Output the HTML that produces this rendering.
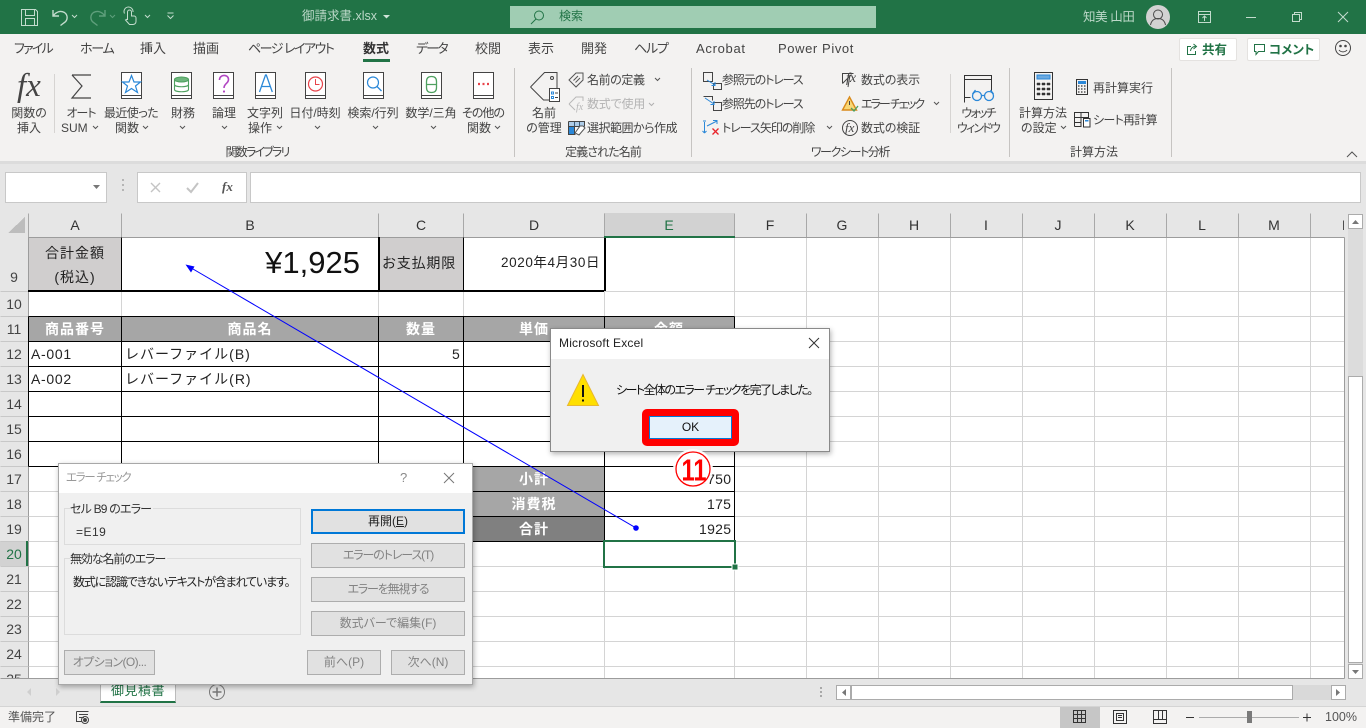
<!DOCTYPE html>
<html lang="ja"><head><meta charset="utf-8"><title>御請求書.xlsx - Excel</title>
<style>
html,body{margin:0;padding:0}
body{width:1366px;height:728px;position:relative;overflow:hidden;background:#e6e6e6;font-family:"Liberation Sans","Noto Sans CJK JP",sans-serif;color:#444}
div,span,svg{box-sizing:border-box}
.a{position:absolute}
svg.a{overflow:visible}
.t{position:absolute;white-space:nowrap;line-height:16px;height:16px;font-size:12px;font-feature-settings:"palt"}
.c{position:absolute;white-space:nowrap;line-height:16px;height:16px;font-size:12px;font-feature-settings:"palt";width:200px;text-align:center}
.tab{font-size:13px;color:#444;top:41px}
.cell{position:absolute;white-space:nowrap;line-height:18px;height:18px;font-size:14px;color:#222;letter-spacing:1px}
.cc{position:absolute;white-space:nowrap;line-height:18px;height:18px;font-size:14px;color:#222;letter-spacing:1px;width:200px;text-align:center}
.hd{position:absolute;width:200px;text-align:center;font-size:14px;line-height:18px;height:18px;color:#333;top:216px}
.rn{position:absolute;left:0;width:28px;text-align:center;font-size:14px;line-height:18px;height:18px;color:#444}
.w{color:#fff;font-weight:bold}
.btn{position:absolute;background:#e1e1e1;border:1px solid #adadad;text-align:center;font-size:12px;font-feature-settings:"palt";color:#838383;white-space:nowrap}
</style></head><body>

<!-- Title bar -->
<div class="a" style="left:0;top:0;width:1366px;height:34px;background:#217346"></div>
<svg class="a" style="left:0;top:0" width="400" height="34" fill="none" stroke="#c3dccd" stroke-width="1">
<path d="M21.5 9.5h14l2 2v14h-16zM25.5 9.5v6h9v-6M25.5 25.5v-7h9v7"/>
<path d="M53 10v6h6M53.5 15.5c3-4 7-5 11-3 4 3 3 8 0 10l-4 3" stroke-width="1.4"/>
<path d="M72 15l2.500 2.500 2.500-2.500"/>
<path d="M105 10v6h-6M104.500 15.500c-3-4-7-5-11-3-4 3-3 8 0 10l4 3" stroke="#5f9f7c" stroke-width="1.400"/>
<path d="M110 15l2.500 2.500 2.500-2.500" stroke="#5f9f7c"/>
<path d="M127.500 20v-8a2 2 0 0 1 4 0v4h2.500a2 2 0 0 1 2 2v3.500a3 3 0 0 1-3 3h-3.500l-4-4.500 2-1M124.500 13.500a4.500 4.500 0 1 1 8.500-1.500"/>
<path d="M145 15l2.500 2.500 2.500-2.500M167.500 13h6M167.500 15.500l3 3 3-3"/>
</svg>
<div class="t" style="left:302px;top:8px;font-size:12.500px;color:#bcd8c8">御請求書.xlsx</div>
<svg class="a" style="left:383px;top:14px" width="8" height="6"><path d="M0 1h7L3.500 4.500z" fill="#d0e4d8"/></svg>
<div class="a" style="left:510px;top:6px;width:366px;height:22px;background:#a0cdb3"></div>
<svg class="a" style="left:528px;top:8px" width="20" height="18" fill="none" stroke="#217346"><circle cx="11" cy="7.500" r="4.500"/><path d="M8 11l-5 5"/></svg>
<div class="t" style="left:559px;top:8px;color:#217346;font-size:12px">検索</div>
<div class="t" style="left:1083px;top:9px;color:#bcd8c8;font-size:12.500px;letter-spacing:-.4px">知美 山田</div>
<div class="a" style="left:1146px;top:5px;width:24px;height:24px;border-radius:50%;background:#d2d2d2"></div>
<svg class="a" style="left:1146px;top:5px" width="24" height="24" fill="none" stroke="#4a4a4a"><circle cx="12" cy="9.500" r="4.500"/><path d="M4.500 20c1-5 4-6.500 7.500-6.500s6.500 1.500 7.500 6.500"/></svg>
<svg class="a" style="left:1190px;top:5px" width="170" height="24" fill="none" stroke="#c3dccd">
<path d="M8.500 6.500h12v11h-12zM8.500 9.500h12M14.500 16v-4.500M12.500 13l2-2 2 2"/>
<path d="M56 12.500h10"/>
<path d="M102.500 9.500h7v7h-7zM104.500 9.500v-2h7v7h-2"/>
<path d="M148 7l10 10M158 7l-10 10"/>
</svg>

<!-- Ribbon -->
<div class="a" style="left:0;top:34px;width:1366px;height:127px;background:#f3f2f1"></div>
<div class="a" style="left:0;top:161px;width:1366px;height:3px;background:#dcdcdc"></div>

<div class="t tab" style="left:14px;letter-spacing:-1.800px">ファイル</div>
<div class="t tab" style="left:80px;letter-spacing:-1.200px">ホーム</div>
<div class="t tab" style="left:140px">挿入</div>
<div class="t tab" style="left:193px">描画</div>
<div class="t tab" style="left:248px;letter-spacing:-1.500px">ページ レイアウト</div>
<div class="t tab" style="left:363px;font-weight:bold;color:#333">数式</div>
<div class="a" style="left:363px;top:59px;width:27px;height:3px;background:#217346"></div>
<div class="t tab" style="left:416px;letter-spacing:-1.800px">データ</div>
<div class="t tab" style="left:475px">校閲</div>
<div class="t tab" style="left:528px">表示</div>
<div class="t tab" style="left:581px">開発</div>
<div class="t tab" style="left:634px;letter-spacing:-1.200px">ヘルプ</div>
<div class="t tab" style="left:696px;letter-spacing:.7px">Acrobat</div>
<div class="t tab" style="left:778px;letter-spacing:.6px">Power Pivot</div>

<!-- share / comment -->
<div class="a" style="left:1179px;top:38px;width:58px;height:23px;background:#fff;border:1px solid #e4e2e0;border-radius:2px"></div>
<svg class="a" style="left:1185px;top:42px" width="14" height="14" fill="none" stroke="#217346"><path d="M6 4.500H2.500v8h8V9M5.500 9c.5-3 2.500-4.500 5-4.500M8.500 2l3 2.500-3 2.500"/></svg>
<div class="t" style="left:1202px;top:42px;font-size:12.500px;font-weight:bold;color:#217346">共有</div>
<div class="a" style="left:1247px;top:38px;width:73px;height:23px;background:#fff;border:1px solid #e4e2e0;border-radius:2px"></div>
<svg class="a" style="left:1253px;top:43px" width="14" height="14" fill="none" stroke="#217346"><path d="M1.500 1.500h10v7h-6l-2.500 3v-3h-1.500z"/></svg>
<div class="t" style="left:1269px;top:42px;font-size:12.500px;font-weight:bold;color:#217346">コメント</div>
<svg class="a" style="left:1334px;top:39px" width="18" height="18" fill="none" stroke="#444"><circle cx="9" cy="9" r="7.500"/><circle cx="6.500" cy="7" r=".8" fill="#444"/><circle cx="11.500" cy="7" r=".8" fill="#444"/><path d="M5 11c2 2.500 6 2.500 8 0"/></svg>

<!-- separators -->
<svg class="a" style="left:0;top:0" width="1366" height="162" stroke-width="1" shape-rendering="crispEdges">
<path d="M54.500 74v59M950.500 74v59" stroke="#d6d4d2"/>
<path d="M514.500 68v89M691.500 68v89M1009.500 68v89M1171.500 68v89" stroke="#c6c4c2"/>
</svg>

<!-- Ribbon icons: function library -->
<div class="t" style="left:17px;top:68px;height:36px;line-height:36px;font-family:'Liberation Serif',serif;font-style:italic;font-size:33px;color:#444;font-feature-settings:normal">fx</div>
<svg class="a" style="left:0;top:0" width="520" height="112" fill="none">
<path d="M72 75h19M72 75l10 11-10 12h19" stroke="#444" stroke-width="1.200"/>
<g stroke="#444" fill="#fff">
<path d="M121.500 72.500h20v26h-20zM121.500 95.500h20"/>
<path d="M171.500 72.500h20v26h-20zM171.500 95.500h20"/>
<path d="M213.500 72.500h20v26h-20zM213.500 95.500h20"/>
<path d="M255.500 72.500h20v26h-20zM255.500 95.500h20"/>
<path d="M305.500 72.500h20v26h-20zM305.500 95.500h20"/>
<path d="M363.500 72.500h20v26h-20zM363.500 95.500h20"/>
<path d="M421.500 72.500h20v26h-20zM421.500 95.500h20"/>
<path d="M473.500 72.500h20v26h-20zM473.500 95.500h20"/>
</g>
<path d="M131.500 75.500l2.500 6.500h6.500l-5 4 2 6.500-6-4-6 4 2-6.500-5-4h6.500z" stroke="#2b88d8" stroke-width="1.200"/>
<g stroke="#4ea05f" stroke-width="1.100"><ellipse cx="181.500" cy="79.500" rx="7" ry="2.500" fill="#6fb67d"/><path d="M174.500 79.500v10c0 3 14 3 14 0v-10M174.500 84.500c0 3 14 3 14 0"/></g>
<path d="M219.500 80c0-6 9-6 9-.5 0 4-4.500 4-4.500 8.500" stroke="#b146c2" stroke-width="1.600"/><circle cx="224" cy="91.500" r="1.100" fill="#b146c2"/>
<path d="M259.500 92l6-17h.8l6 17M261.500 86.500h9" stroke="#2b88d8" stroke-width="1.300"/>
<circle cx="315.500" cy="84" r="7" stroke="#e8434a" stroke-width="1.200"/><path d="M315.500 79v5.500h4" stroke="#e8434a"/>
<circle cx="373" cy="82.500" r="5.500" stroke="#2b88d8" stroke-width="1.200"/><path d="M377 86.500l4.500 4.500" stroke="#2b88d8" stroke-width="1.300"/>
<path d="M431.500 76.500c3.500 0 5 2 5 5v6c0 3-1.500 5-5 5s-5-2-5-5v-6c0-3 1.500-5 5-5zM426.500 84.500h10" stroke="#4ea05f" stroke-width="1.300"/>
<path d="M478 84h2M482.500 84h2M487 84h2" stroke="#e8434a" stroke-width="2.200"/>
</svg>

<div class="c" style="left:-71px;top:105px">関数の</div><div class="c" style="left:-71px;top:120px">挿入</div>
<div class="c" style="left:-19px;top:105px;letter-spacing:-1px">オート</div><div class="t" style="left:61px;top:120px">SUM</div>
<div class="c" style="left:31px;top:105px;letter-spacing:-.6px">最近使った</div><div class="t" style="left:115px;top:120px">関数</div>
<div class="c" style="left:83px;top:105px">財務</div>
<div class="c" style="left:124px;top:105px">論理</div>
<div class="c" style="left:165px;top:105px">文字列</div><div class="t" style="left:248px;top:120px">操作</div>
<div class="c" style="left:215px;top:105px">日付/時刻</div>
<div class="c" style="left:273px;top:105px">検索/行列</div>
<div class="c" style="left:331px;top:105px">数学/三角</div>
<div class="c" style="left:383px;top:105px;letter-spacing:-1px">その他の</div><div class="t" style="left:467px;top:120px">関数</div>
<div class="c" style="left:157px;top:144px;letter-spacing:-1.800px">関数ライブラリ</div>
<svg class="a" style="left:0;top:0" width="1366" height="162" fill="none" stroke="#555">
<path d="M93 126l2.500 2.500 2.500-2.500M143 126l2.500 2.500 2.500-2.500M180 126l2.500 2.500 2.500-2.500M222 126l2.500 2.500 2.500-2.500M277 126l2.500 2.500 2.500-2.500M315 126l2.500 2.500 2.500-2.500M373 126l2.500 2.500 2.500-2.500M431 126l2.500 2.500 2.500-2.500M495 126l2.500 2.500 2.500-2.500M655 78l2.500 2.500 2.500-2.500M827 126l2.500 2.500 2.500-2.500M934 102l2.500 2.500 2.500-2.500M1061 126l2.500 2.500 2.500-2.500M1347 157l5-5 5 5"/>
<path d="M649 103l2.500 2.500 2.500-2.500" stroke="#b0b0b0"/>
<!-- defined names -->
<path d="M530.500 87l14-14.500h12.500v20.500M530.500 87l13 13h7" stroke="#444"/><circle cx="552" cy="78" r="1.500" stroke="#444"/>
<path d="M549.500 88.500h10v13h-10z" stroke="#444" fill="#fff"/><path d="M551.500 92h2v2h-2zM551.500 96.500h2v2h-2z" stroke="#2b88d8"/><path d="M555 93h3M555 97.500h3" stroke="#444"/>
<path d="M569 80l7-7h7v7l-7 7zM573.500 80.500l4.500-4.500M575.500 82.500l4.500-4.500" stroke="#555"/>
<path d="M569 104l7-7h7v4M569 104l6 6" stroke="#b8b8b8"/>
<path d="M568.500 121.500h16v5M568.500 121.500v13h7M568.500 126.500h16M574.500 121.500v13M579.500 121.500v5" stroke="#444"/>
<path d="M569 127h5v7h-5z" fill="#2b88d8" stroke="none"/><path d="M569 122h15v4h-15z" fill="#2b88d8" stroke="none" opacity=".35"/>
<path d="M575 133l5-7h3l2 2-6 7z" stroke="#555" fill="#fff"/>
<!-- trace icons -->
<path d="M703.500 72.500h9v9h-9zM713.500 83.500h8v6h-8z" stroke="#444"/><path d="M707 80l8 5M711.500 85.500h3.500v-3.500" stroke="#2b88d8"/>
<path d="M703.500 96.500h9v4M703.500 96.500v0M713.500 102.500h8v8h-8z" stroke="#444"/><path d="M705 98l9 6M710.500 104.500h3.500v-3.500" stroke="#2b88d8"/>
<path d="M704.500 122v11M704.500 133l-2-2M704.500 133l2-2M707 126l10-5M713 120.500h4v3.500M703 121h3" stroke="#2b88d8"/>
<path d="M712.500 128.500l6 6M718.500 128.500l-6 6" stroke="#e8232a" stroke-width="1.300"/>
<path d="M842.500 83.500v-10h11M842.500 83.500l9-9" stroke="#444"/>
<path d="M848 87l2-12" stroke="#444"/>
<path d="M849.500 97l7 13h-14z" stroke="#d98a1b" stroke-width="1.400" fill="#f8d775"/><path d="M849.500 101v4" stroke="#444"/>
<path d="M851 108l3 3 4-5" stroke="#4ea05f" stroke-width="1.300"/>
<circle cx="850" cy="128" r="7.500" stroke="#444"/>
<!-- watch -->
<path d="M964.500 102.500v-27h27v16M964.500 79.500h27M964.500 97.500h6" stroke="#333"/>
<g stroke="#2b88d8" stroke-width="1.300"><circle cx="977" cy="96" r="4.500"/><circle cx="989" cy="96" r="4.500"/><path d="M981.500 95.500h3M972.500 94l3-4M993.500 94l-3-4"/></g>
<!-- calc -->
<path d="M1034.500 72.500h18v27h-18z" stroke="#333"/><path d="M1037 75h13v4h-13z" fill="#6aa9e0" stroke="#2b88d8"/>
<path d="M1037 83h3v2h-3zM1042 83h3v2h-3zM1047 83h3v2h-3zM1037 88h3v2h-3zM1042 88h3v2h-3zM1047 88h3v2h-3zM1037 93h3v2h-3zM1042 93h3v2h-3zM1047 93h3v2h-3z" fill="#333" stroke="#333" stroke-width=".5"/>
<path d="M1076.500 79.500h11v15h-11z" stroke="#333"/><path d="M1078 81h8v3h-8z" fill="#2b88d8" stroke="none"/>
<path d="M1078 86h1.500M1081 86h1.500M1084 86h1.500M1078 89h1.500M1081 89h1.500M1084 89h1.500M1078 92h1.500M1081 92h1.500M1084 92h1.500" stroke="#333" stroke-width="1.300"/>
<path d="M1074.500 126.500v-14h14v7M1074.500 117.500h14M1074.500 122.500h7M1081 112.500v14M1074.500 126.500h7" stroke="#333"/>
<path d="M1083.500 118.500h6.500v8.500h-6.500z" stroke="#333" fill="#fff"/><path d="M1085 120h3.500v1.500h-3.500z" fill="#2b88d8" stroke="none"/>
</svg>
<div class="t" style="left:846px;top:70px;height:18px;line-height:18px;font-family:'Liberation Serif',serif;font-style:italic;font-size:14px;color:#444;font-feature-settings:normal">fx</div>
<div class="t" style="left:845px;top:119px;height:18px;line-height:18px;font-family:'Liberation Serif',serif;font-style:italic;font-size:13px;color:#444;font-feature-settings:normal">fx</div>
<div class="t" style="left:576px;top:101px;height:14px;line-height:14px;font-family:'Liberation Serif',serif;font-style:italic;font-size:10px;color:#b8b8b8;font-feature-settings:normal">fx</div>

<div class="c" style="left:444px;top:105px">名前</div><div class="c" style="left:444px;top:120px">の管理</div>
<div class="t" style="left:587px;top:72px;letter-spacing:-.4px">名前の定義</div>
<div class="t" style="left:587px;top:96px;color:#b4b4b4;letter-spacing:-.2px">数式で使用</div>
<div class="t" style="left:587px;top:120px;letter-spacing:-.5px">選択範囲から作成</div>
<div class="c" style="left:503px;top:144px;letter-spacing:-.9px">定義された名前</div>
<div class="t" style="left:722px;top:72px;letter-spacing:-1.100px">参照元のトレース</div>
<div class="t" style="left:722px;top:96px;letter-spacing:-1.100px">参照先のトレース</div>
<div class="t" style="left:722px;top:120px;letter-spacing:-1px">トレース矢印の削除</div>
<div class="t" style="left:861px;top:72px;letter-spacing:-.1px">数式の表示</div>
<div class="t" style="left:861px;top:96px;letter-spacing:-2px">エラー チェック</div>
<div class="t" style="left:861px;top:120px;letter-spacing:-.1px">数式の検証</div>
<div class="c" style="left:750px;top:144px;letter-spacing:-1.400px">ワークシート分析</div>
<div class="c" style="left:878px;top:105px;letter-spacing:-1.800px">ウォッチ</div><div class="c" style="left:878px;top:120px;letter-spacing:-1.800px">ウィンドウ</div>
<div class="c" style="left:943px;top:105px">計算方法</div><div class="t" style="left:1021px;top:120px">の設定</div>
<div class="t" style="left:1093px;top:80px">再計算実行</div>
<div class="t" style="left:1093px;top:112px;letter-spacing:-.7px">シート再計算</div>
<div class="c" style="left:994px;top:144px">計算方法</div>

<!-- Formula bar -->
<div class="a" style="left:5px;top:172px;width:102px;height:31px;background:#fff;border:1px solid #c8c8c8"></div>
<svg class="a" style="left:0;top:165px" width="1366" height="40">
<path d="M93 20h7l-3.500 4z" fill="#777"/>
<path d="M122 19h2v2h-2zM122 24h2v2h-2zM122 29h2v2h-2z" fill="#b5b5b5" transform="translate(0,-5)"/>
<path d="M1349 20l3.500 3.500 3.500-3.500" fill="none" stroke="#777" stroke-width="2"/>
</svg>
<div class="a" style="left:137px;top:172px;width:110px;height:31px;background:#fff;border:1px solid #c8c8c8"></div>
<div class="a" style="left:250px;top:172px;width:1111px;height:31px;background:#fff;border:1px solid #c8c8c8"></div>
<svg class="a" style="left:137px;top:172px" width="110" height="31" fill="none">
<path d="M14 11l9 9M23 11l-9 9" stroke="#c4c4c4" stroke-width="1.400"/>
<path d="M50 16l4 4 7-9" stroke="#c4c4c4" stroke-width="2"/>
</svg>
<div class="t" style="left:222px;top:179px;font-family:'Liberation Serif',serif;font-style:italic;font-weight:bold;font-size:13px;color:#555;font-feature-settings:normal">fx</div>

<!-- Sheet -->
<div class="a" style="left:28px;top:237px;width:1316px;height:441px;background:#fff"></div>
<svg class="a" style="left:0;top:0" width="1366" height="728" shape-rendering="crispEdges">
<!-- corner + selected headers -->
<path d="M8 233h17v-16z" fill="#bdbdbd"/>
<rect x="604" y="213" width="130" height="24" fill="#d2d2d2"/>
<rect x="0" y="541" width="28" height="25" fill="#d2d2d2"/>
<!-- fills -->
<rect x="28" y="237" width="93" height="54" fill="#d0cece"/>
<rect x="378" y="237" width="85" height="54" fill="#d0cece"/>
<rect x="28" y="316" width="706" height="25" fill="#a6a6a6"/>
<rect x="463" y="466" width="141" height="50" fill="#a6a6a6"/>
<rect x="463" y="516" width="141" height="25" fill="#808080"/>
<g transform="translate(.5,.5)" fill="none">
<!-- grid -->
<path stroke="#d4d4d4" d="M121 237V678M378 237V678M463 237V678M604 237V678M734 237V678M806 237V678M878 237V678M950 237V678M1022 237V678M1094 237V678M1166 237V678M1238 237V678M1310 237V678
M28 291H1344M28 316H1344M28 341H1344M28 366H1344M28 391H1344M28 416H1344M28 441H1344M28 466H1344M28 491H1344M28 516H1344M28 541H1344M28 566H1344M28 591H1344M28 616H1344M28 641H1344M28 666H1344"/>
<!-- header ticks -->
<path stroke="#a8a8a8" d="M28 213V237M121 213V237M378 213V237M463 213V237M604 213V237M734 213V237M806 213V237M878 213V237M950 213V237M1022 213V237M1094 213V237M1166 213V237M1238 213V237M1310 213V237"/>
<path stroke="#9c9c9c" d="M28 237H1344M28 237V678M1344 237V678M0 678H1344"/>
<path stroke="#c8c8c8" d="M0 291H28M0 316H28M0 341H28M0 366H28M0 391H28M0 416H28M0 441H28M0 466H28M0 491H28M0 516H28M0 541H28M0 566H28M0 591H28M0 616H28M0 641H28M0 666H28"/>
<!-- black borders -->
<path stroke="#000" d="M121 237V291M463 237V291M28 316H734M28 341H734M28 366H734M28 391H734M28 416H734M28 441H734M28 466H734M463 491H734M463 516H734M463 541H734
M121 316V466M378 316V466M463 316V541M604 316V541M734 316V541M28 316V466"/>
</g>
<path fill="#000" d="M28 290h576v2H28zM378 237h2v54h-2zM604 237h2v54h-2z"/>
<!-- selected column underline -->
<rect x="604" y="236" width="131" height="2" fill="#217346"/>
<rect x="26" y="541" width="2" height="25" fill="#217346"/>
<!-- selection -->
<path d="M604 541h131v26H604z" fill="none" stroke="#217346" stroke-width="2"/>
<rect x="732" y="564" width="6" height="6" fill="#217346" stroke="#fff" stroke-width="1"/>
</svg>

<!-- headers -->
<div class="hd" style="left:-25px">A</div>
<div class="hd" style="left:150px">B</div>
<div class="hd" style="left:321px">C</div>
<div class="hd" style="left:434px">D</div>
<div class="hd" style="left:569px;color:#217346">E</div>
<div class="hd" style="left:670px">F</div>
<div class="hd" style="left:742px">G</div>
<div class="hd" style="left:814px">H</div>
<div class="hd" style="left:886px">I</div>
<div class="hd" style="left:958px">J</div>
<div class="hd" style="left:1030px">K</div>
<div class="hd" style="left:1102px">L</div>
<div class="hd" style="left:1174px">M</div>
<div class="a" style="left:1311px;top:216px;width:33px;height:18px;overflow:hidden;font-size:14px;line-height:18px;color:#333;padding-left:31px">N</div>

<div class="rn" style="top:268px">9</div>
<div class="rn" style="top:295px">10</div>
<div class="rn" style="top:320px">11</div>
<div class="rn" style="top:345px">12</div>
<div class="rn" style="top:370px">13</div>
<div class="rn" style="top:395px">14</div>
<div class="rn" style="top:420px">15</div>
<div class="rn" style="top:445px">16</div>
<div class="rn" style="top:470px">17</div>
<div class="rn" style="top:495px">18</div>
<div class="rn" style="top:520px">19</div>
<div class="rn" style="top:545px;color:#217346">20</div>
<div class="rn" style="top:570px">21</div>
<div class="rn" style="top:595px">22</div>
<div class="rn" style="top:620px">23</div>
<div class="rn" style="top:645px">24</div>
<div class="a" style="left:0;top:667px;width:28px;height:11px;overflow:hidden"><div class="rn" style="top:3px">25</div></div>

<!-- cells -->
<div class="cc" style="left:-25px;top:244px">合計金額</div>
<div class="cc" style="left:-25px;top:268px">(税込)</div>
<div class="a" style="left:121px;top:240px;width:239px;text-align:right;white-space:nowrap;font-size:31px;line-height:46px;color:#111">¥1,925</div>
<div class="cell" style="left:382px;top:254px;letter-spacing:.8px">お支払期限</div>
<div class="cell" style="left:501px;top:254px;font-size:13.500px;letter-spacing:.6px">2020年4月30日</div>
<div class="cc w" style="left:-25px;top:320px">商品番号</div>
<div class="cc w" style="left:150px;top:320px">商品名</div>
<div class="cc w" style="left:321px;top:320px">数量</div>
<div class="cc w" style="left:434px;top:320px">単価</div>
<div class="cc w" style="left:569px;top:320px">金額</div>
<div class="cell" style="left:31px;top:345px;letter-spacing:.7px">A-001</div>
<div class="cell" style="left:31px;top:370px;letter-spacing:.7px">A-002</div>
<div class="cell" style="left:125px;top:345px">レバーファイル(B)</div>
<div class="cell" style="left:125px;top:370px">レバーファイル(R)</div>
<div class="cell" style="left:452px;top:345px;letter-spacing:0">5</div>
<div class="cc w" style="left:434px;top:470px">小計</div>
<div class="cc w" style="left:434px;top:495px">消費税</div>
<div class="cc w" style="left:434px;top:520px">合計</div>
<div class="cell" style="left:699px;top:470px;letter-spacing:.3px">1750</div>
<div class="cell" style="left:707px;top:495px;letter-spacing:.3px">175</div>
<div class="cell" style="left:699px;top:520px;letter-spacing:.3px">1925</div>

<!-- trace arrow -->
<svg class="a" style="left:0;top:0" width="1366" height="728">
<path d="M636 528L187 265.500" stroke="#0000ff" stroke-width="1" fill="none"/>
<path d="M185.500 264.500l9 2-3.500 6z" fill="#0000ff"/>
<circle cx="636" cy="528" r="2.800" fill="#0000ff"/>
</svg>

<!-- bottom strip -->
<div class="a" style="left:0;top:679px;width:1348px;height:27px;background:#e6e6e6"></div>
<svg class="a" style="left:0;top:679px" width="1366" height="27">
<path d="M27 13l4-4v8zM56 9l4 4-4 4z" fill="#cfcfcf"/>
<circle cx="217" cy="13" r="7.500" fill="none" stroke="#777"/><path d="M212.500 13h9M217 8.500v9" stroke="#777" stroke-width="1.500"/>
<path d="M820 8h2v2h-2zM820 12h2v2h-2zM820 16h2v2h-2z" fill="#a8a8a8"/>
</svg>
<div class="a" style="left:100px;top:678px;width:76px;height:25px;background:#fff;border-left:1px solid #bbb;border-right:1px solid #bbb;border-bottom:2px solid #217346;text-align:center;font-size:13px;line-height:26px;color:#217346;letter-spacing:.5px;overflow:hidden">御見積書</div>

<!-- h scrollbar -->
<div class="a" style="left:836px;top:685px;width:509px;height:15px;background:#d9d9d9"></div>
<div class="a" style="left:851px;top:685px;width:442px;height:15px;background:#fff;border:1px solid #ababab"></div>
<div class="a" style="left:836px;top:685px;width:15px;height:15px;background:#fff;border:1px solid #ababab"></div>
<div class="a" style="left:1331px;top:685px;width:15px;height:15px;background:#fff;border:1px solid #ababab"></div>
<svg class="a" style="left:836px;top:685px" width="510" height="15"><path d="M10 4v7l-4-3.500zM500 4v7l4-3.500z" fill="#777"/></svg>

<!-- v scrollbar -->
<div class="a" style="left:1348px;top:214px;width:15px;height:465px;background:#dcdcdc"></div>
<div class="a" style="left:1348px;top:214px;width:15px;height:15px;background:#fff;border:1px solid #ababab"></div>
<div class="a" style="left:1348px;top:376px;width:15px;height:287px;background:#fff;border:1px solid #ababab"></div>
<div class="a" style="left:1348px;top:664px;width:15px;height:15px;background:#fff;border:1px solid #ababab"></div>
<svg class="a" style="left:1348px;top:214px" width="15" height="465"><path d="M4 10h7L7.500 6zM4 456h7l-3.500 4z" fill="#777"/></svg>

<!-- status bar -->
<div class="a" style="left:0;top:706px;width:1366px;height:22px;background:#f3f2f1;border-top:1px solid #d4d4d4"></div>
<div class="t" style="left:8px;top:709px;color:#555;font-feature-settings:normal;letter-spacing:0">準備完了</div>
<svg class="a" style="left:75px;top:710px" width="15" height="15" fill="none" stroke="#444"><path d="M1.500 1.500h12M1.500 1.500v10h5M4 4.500h9M4 7.500h5"/><circle cx="10" cy="10" r="3.500"/><circle cx="10" cy="10" r="1.500" fill="#444"/></svg>
<div class="a" style="left:1060px;top:707px;width:40px;height:21px;background:#c6c6c6"></div>
<svg class="a" style="left:1060px;top:707px" width="306" height="21" fill="none" stroke="#333" shape-rendering="crispEdges">
<path d="M13.500 3.500h12v12h-12zM13.500 7.500h12M13.500 11.500h12M17.500 3.500v12M21.500 3.500v12"/>
<path d="M53.500 3.500h13v13h-13zM56.500 6.500h7v7h-7zM58 8.500h4M58 10.500h4"/>
<path d="M93.500 3.500h13v13h-13zM93.500 12.500h13M98.500 3.500v9M102.500 3.500v9"/>
<path d="M126 10.500h8M243 10.500h8M247 6.500v8"/>
<path d="M139 10.500h100" stroke="#ababab"/>
</svg>
<div class="a" style="left:1247px;top:711px;width:5px;height:12px;background:#7a7a7a"></div>
<div class="t" style="left:1325px;top:709px;font-size:12.500px;color:#555;font-feature-settings:normal">100%</div>

<!-- Error check dialog -->
<div class="a" style="left:58px;top:463px;width:415px;height:222px;background:#f0f0f0;border:1px solid #a8a8a8;box-shadow:1px 2px 5px rgba(0,0,0,.3)"></div>
<div class="a" style="left:59px;top:464px;width:413px;height:29px;background:#fff"></div>
<div class="t" style="left:66px;top:470px;font-size:11.500px;color:#999;letter-spacing:-1.300px">エラー チェック</div>
<div class="t" style="left:400px;top:470px;font-size:13px;color:#8a8a8a;font-feature-settings:normal">?</div>
<svg class="a" style="left:443px;top:472px" width="12" height="12" fill="none" stroke="#777"><path d="M1 1l10 10M11 1L1 11"/></svg>
<div class="a" style="left:64px;top:508px;width:237px;height:37px;border:1px solid #dcdcdc"></div>
<div class="a" style="left:64px;top:558px;width:237px;height:77px;border:1px solid #dcdcdc"></div>
<div class="t" style="left:70px;top:501px;background:#f0f0f0;color:#333;padding-right:2px;letter-spacing:-.8px">セル B9 のエラー</div>
<div class="t" style="left:76px;top:524px;color:#333;letter-spacing:.5px">=E19</div>
<div class="t" style="left:70px;top:551px;background:#f0f0f0;color:#333;padding-right:2px;letter-spacing:-1.100px">無効な名前のエラー</div>
<div class="t" style="left:73px;top:574px;color:#222;letter-spacing:-1.150px">数式に認識できないテキストが含まれています。</div>
<div class="btn" style="left:311px;top:509px;width:154px;height:25px;border:2px solid #0078d7;color:#222;line-height:21px">再開(<u>E</u>)</div>
<div class="btn" style="left:311px;top:543px;width:154px;height:25px;line-height:23px;letter-spacing:-1.100px">エラーのトレース(T)</div>
<div class="btn" style="left:311px;top:577px;width:154px;height:25px;line-height:23px;letter-spacing:-1.200px">エラーを無視する</div>
<div class="btn" style="left:311px;top:611px;width:154px;height:25px;line-height:23px">数式バーで編集(F)</div>
<div class="btn" style="left:64px;top:650px;width:91px;height:25px;line-height:23px;letter-spacing:-.6px">オプション(O)...</div>
<div class="btn" style="left:307px;top:650px;width:74px;height:25px;line-height:23px">前へ(P)</div>
<div class="btn" style="left:391px;top:650px;width:74px;height:25px;line-height:23px">次へ(N)</div>

<!-- Microsoft Excel dialog -->
<div class="a" style="left:550px;top:328px;width:280px;height:124px;background:#f0f0f0;border:1px solid #8a8a8a;box-shadow:1px 2px 5px rgba(0,0,0,.3)"></div>
<div class="a" style="left:551px;top:329px;width:278px;height:30px;background:#fff"></div>
<div class="t" style="left:559px;top:335px;font-size:12px;color:#222;font-feature-settings:normal;letter-spacing:.2px">Microsoft Excel</div>
<svg class="a" style="left:808px;top:337px" width="12" height="12" fill="none" stroke="#333"><path d="M1 1l10 10M11 1L1 11"/></svg>
<svg class="a" style="left:566px;top:373px" width="36" height="34"><path d="M17 1.500L32.500 32.500H1.500z" fill="#ffdf00" stroke="#e8b830"/><path d="M17 12v12" stroke="#111" stroke-width="2"/><rect x="16" y="26.500" width="2" height="2" fill="#111"/></svg>
<div class="t" style="left:616px;top:382px;color:#111;letter-spacing:-1.550px">シート全体のエラー チェックを完了しました。</div>
<div class="a" style="left:642px;top:409px;width:97px;height:37px;border:7px solid #ff0000;border-radius:5px;background:#e5f1fb"></div>
<div class="a" style="left:649px;top:416px;width:83px;height:23px;border:1px solid #0078d7;background:#e5f1fb;text-align:center;font-size:12px;line-height:21px;color:#111">OK</div>

<!-- Callout 11 -->
<svg class="a" style="left:670px;top:447px" width="46" height="46">
<circle cx="23" cy="22" r="20" fill="#fff" opacity=".95"/>
<circle cx="23" cy="22" r="17" fill="#fff" stroke="#ff0000" stroke-width="1.300"/>
<text x="24" y="33.500" text-anchor="middle" font-family="Liberation Sans, sans-serif" font-weight="bold" font-size="31" fill="#ff0000" textLength="25" lengthAdjust="spacingAndGlyphs">11</text>
</svg>
</body></html>
